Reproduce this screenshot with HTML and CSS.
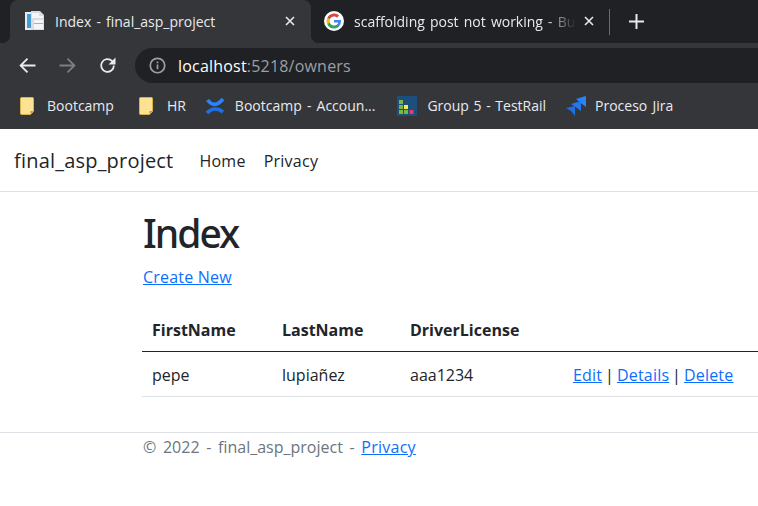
FILE: index.html
```html
<!DOCTYPE html>
<html lang="en">
<head>
<meta charset="UTF-8">
<title>Index - final_asp_project</title>
<link rel="stylesheet" href="styles.css">
</head>
<body>
<div class="chrome">
  <div class="tabstrip">
    <div class="tab tab-active">
      <svg class="favicon" viewBox="0 0 20 20"><path d="M0 1h8v18H0z" fill="#e8eef4"/><path d="M2 3h4v14H2z" fill="#4a9ad8"/><path d="M6 0h9l4 4v15H6z" fill="#d9dde2"/><path d="M7 2h7v3h4v2H7z" fill="#f4f5f6"/><path d="M9 9h9v9H9z" fill="#f4f5f6"/><path d="M9 12h9v1H9z" fill="#a9b0b8"/></svg>
      <span class="tab-title">Index - final_asp_project</span>
      <svg class="tab-close" viewBox="0 0 10 10"><path d="M1 1l8 8M9 1l-8 8"/></svg>
    </div>
    <div class="tab tab-second">
      <svg class="favicon" viewBox="0 0 20 20"><circle cx="10" cy="10" r="10" fill="#fff"/><path d="M10 9v2.600h4.300c-.4 2-2 3.100-4.300 3.100a4.700 4.700 0 0 1 0-9.400c1.200 0 2.200.4 3 1.100l1.900-1.900A7.300 7.300 0 1 0 10 17.300c4 0 7-2.800 7-7.300 0-.3 0-.7-.1-1z" fill="#4285f4"/><path d="M3.500 6.500l2.200 1.600A4.700 4.700 0 0 1 13 6.400l1.900-1.900a7.300 7.300 0 0 0-11.400 2z" fill="#ea4335"/><path d="M3.400 13.400l2.200-1.700a4.700 4.700 0 0 1 0-3.500L3.500 6.500a7.300 7.300 0 0 0-.1 6.900z" fill="#fbbc05"/><path d="M10 17.300c2 0 3.700-.7 4.900-1.800l-2.300-1.700c-.7.500-1.600.9-2.600.9a4.700 4.700 0 0 1-4.400-3l-2.200 1.700a7.300 7.300 0 0 0 6.600 3.900z" fill="#34a853"/></svg>
      <span class="tab-title tab-title-fade">scaffolding post not working - Bu</span>
      <svg class="tab-close" viewBox="0 0 10 10"><path d="M1 1l8 8M9 1l-8 8"/></svg>
    </div>
    <div class="tab-sep"></div>
    <svg class="new-tab" viewBox="0 0 15 15"><path d="M7.500 0v15M0 7.500h15"/></svg>
  </div>
  <div class="toolbar">
    <svg class="nav-icon" viewBox="0 0 16 16"><path d="M15.500 8H1.500M8 1.500L1.500 8 8 14.500"/></svg>
    <svg class="nav-icon nav-off" viewBox="0 0 16 16"><path d="M.5 8h14M8 1.500L14.500 8 8 14.500"/></svg>
    <svg class="nav-icon" viewBox="0 0 16 16"><path d="M14 8a6 6 0 1 1-1.800-4.300L14.500 6"/><path class="solid" d="M15.500 .5v6.500H9z"/></svg>
    <div class="omnibox">
      <svg class="info" viewBox="0 0 16 16"><circle cx="8" cy="8" r="6.800"/><path d="M8 7v4.500M8 4.200v1.600"/></svg>
      <span class="url">localhost<span class="url-rest">:5218/owners</span></span>
    </div>
  </div>
  <div class="bookmarks">
    <div class="bookmark bm-first">
      <svg class="bm-folder" viewBox="0 0 15 18"><path d="M1.500.5h11a1 1 0 0 1 1 1v13l-3 3h-9a1 1 0 0 1-1-1v-15a1 1 0 0 1 1-1z" fill="#fde293" stroke="#d8b24a"/><path d="M10.500 14h3l-3 3z" fill="#b8963a"/></svg>
      <span>Bootcamp</span>
    </div>
    <div class="bookmark bm-hr">
      <svg class="bm-folder" viewBox="0 0 15 18"><path d="M1.500.5h11a1 1 0 0 1 1 1v13l-3 3h-9a1 1 0 0 1-1-1v-15a1 1 0 0 1 1-1z" fill="#fde293" stroke="#d8b24a"/><path d="M10.500 14h3l-3 3z" fill="#b8963a"/></svg>
      <span>HR</span>
    </div>
    <div class="bookmark bm-conf">
      <svg class="bm-icon" viewBox="0 0 20 20"><path class="arc" d="M2.500 4C7 10 12 10 18 3" stroke="#2684ff"/><path class="arc" d="M2 17C7 12 13 12 18 16" stroke="#1f6fe0"/></svg>
      <span>Bootcamp - Accoun...</span>
    </div>
    <div class="bookmark bm-rail">
      <svg class="bm-icon" viewBox="0 0 20 20"><path d="M0 0h20v20H0z" fill="#1d4f7c"/><path d="M2 4h4v4H2zM2 9h4v4H2zM2 14h4v4H2zM7 14h4v4H7z" fill="#7ab648"/><path d="M7 9h4v4H7z" fill="#f2e85c"/><path d="M12.500 14h4v4h-4z" fill="#e0406a"/></svg>
      <span>Group 5 - TestRail</span>
    </div>
    <div class="bookmark bm-jira">
      <svg class="bm-icon" viewBox="0 0 20 20"><path d="M10 3l10-3v11l-4-3z" fill="#2684ff"/><path d="M5 8l10-3v10l-4-3z" fill="#2478ee"/><path d="M0 12l9-2v10l-4-5z" fill="#1f6fe0"/></svg>
      <span>Proceso Jira</span>
    </div>
  </div>
</div>

<nav class="navbar">
  <a class="brand" href="#">final_asp_project</a>
  <a class="nav-link" href="#">Home</a>
  <a class="nav-link" href="#">Privacy</a>
</nav>

<main class="container">
  <h1>Index</h1>
  <p class="create"><a href="#">Create New</a></p>
  <table class="table">
    <thead>
      <tr>
        <th class="col-first">FirstName</th>
        <th class="col-last">LastName</th>
        <th class="col-license">DriverLicense</th>
        <th></th>
      </tr>
    </thead>
    <tbody>
      <tr>
        <td>pepe</td>
        <td>lupiañez</td>
        <td>aaa1234</td>
        <td class="actions"><a href="#">Edit</a> | <a href="#">Details</a> | <a href="#">Delete</a></td>
      </tr>
    </tbody>
  </table>
</main>

<footer class="footer">
  © 2022 - final_asp_project - <a href="#">Privacy</a>
</footer>
</body>
</html>
```

FILE: styles.css
```css
body { margin: 0; font-family: "Open Sans", "Noto Sans", sans-serif; background-color: white; color: #212529; overflow: hidden; font-size: 16px; }
a { color: #0d6efd; }

.chrome { background-color: #35363a; color: #e8eaed; font-size: 14px; word-spacing: 1.5px; }
.tabstrip { height: 43px; background-color: #202124; display: flex; align-items: flex-start; padding-left: 10px; box-sizing: border-box; }
.tab { width: 301px; height: 43px; display: flex; align-items: center; padding: 0 16px 1px 15px; box-sizing: border-box; flex-shrink: 0; }
.tab-active { background-color: #35363a; border-radius: 8px 8px 0 0; position: relative; }
.tab-active::before { content: ""; position: absolute; left: -8px; bottom: 0; width: 8px; height: 8px; background: radial-gradient(circle at 0 0, transparent 8px, #35363a 8.5px); }
.tab-active::after { content: ""; position: absolute; right: -8px; bottom: 0; width: 8px; height: 8px; background: radial-gradient(circle at 100% 0, transparent 8px, #35363a 8.5px); }
.tab-second { width: 299px; padding-left: 13px; }
.favicon { width: 20px; height: 20px; flex-shrink: 0; }
.tab-title { margin-left: 10px; white-space: nowrap; }
.tab-title-fade { -webkit-mask-image: linear-gradient(to right, black 192px, transparent 222px); mask-image: linear-gradient(to right, black 192px, transparent 222px); }
.tab-close { width: 10px; height: 10px; margin-left: auto; fill: none; stroke: #e8eaed; stroke-width: 1.6; flex-shrink: 0; }
.tab-sep { width: 1px; height: 26px; background-color: #6a6b6e; margin: 9px 0 0 -1px; flex-shrink: 0; }
.new-tab { width: 15px; height: 15px; margin: 14px 0 0 19px; fill: none; stroke: #e8eaed; stroke-width: 2; flex-shrink: 0; }

.toolbar { height: 40px; display: flex; align-items: center; padding: 5px 0 0 19px; box-sizing: border-box; background-color: #35363a; }
.nav-icon { width: 17px; height: 17px; margin-right: 23px; fill: none; stroke: #e8eaed; stroke-width: 1.700; flex-shrink: 0; }
.nav-off { stroke: #7d7e81; }
.solid { fill: #e8eaed; stroke: none; }
.omnibox { flex: 1; height: 35px; margin-left: -4px; background-color: #202124; border-radius: 18px 0 0 18px; display: flex; align-items: center; padding-left: 14px; font-size: 16px; word-spacing: 0; }
.info { width: 17px; height: 17px; fill: none; stroke: #9aa0a6; stroke-width: 1.600; flex-shrink: 0; }
.url { margin-left: 12px; color: #fff; letter-spacing: .2px; }
.url-rest { color: #9aa0a6; }

.bookmarks { height: 46px; display: flex; align-items: center; padding: 0 0 1px 20px; box-sizing: border-box; }
.bookmark { display: flex; align-items: center; white-space: nowrap; }
.bm-first { margin-right: 25px; }
.bm-hr { margin-right: 19px; }
.bm-conf { margin-right: 22px; }
.bm-rail { margin-right: 20px; word-spacing: 1px; }
.bm-folder { width: 15px; height: 18px; margin-right: 12px; flex-shrink: 0; }
.bm-hr .bm-folder { margin-right: 13px; }
.bm-icon { width: 20px; height: 20px; margin-right: 10px; flex-shrink: 0; }
.bm-jira .bm-icon { margin-right: 9px; }
.arc { fill: none; stroke-width: 3.600; }

.navbar { height: 63px; border-bottom: 1px solid #dee2e6; display: flex; align-items: center; padding: 1px 0 0 14px; box-sizing: border-box; }
.navbar a { color: #212529; text-decoration: none; }
.brand { font-size: 20px; margin-right: 17px; letter-spacing: .2px; }
.nav-link { margin: 0 9px; letter-spacing: .25px; }

.container { padding-left: 142px; }
h1 { font-family: "Noto Sans", "Open Sans", sans-serif; font-size: 39px; font-weight: 500; letter-spacing: -2px; margin: 17px 0 8px 1px; line-height: 48px; }
.create { margin: 0 0 18px 1px; line-height: 24px; letter-spacing: .2px; }
.table { width: 100%; border-collapse: collapse; }
.table th, .table td { padding: 9px 9px 7px 10px; text-align: left; line-height: 28px; }
.table th { border-bottom: 1px solid #212529; }
.table td { border-bottom: 1px solid #dee2e6; }
.col-first { width: 111px; }
.col-last { width: 109px; }
.col-license { width: 144px; }
.actions { word-spacing: -1.5px; letter-spacing: .2px; }

.footer { margin-top: 35px; border-top: 1px solid #dee2e6; padding-left: 143px; line-height: 28px; color: #6c757d; word-spacing: 2.5px; }
.footer a { letter-spacing: .25px; }
```
